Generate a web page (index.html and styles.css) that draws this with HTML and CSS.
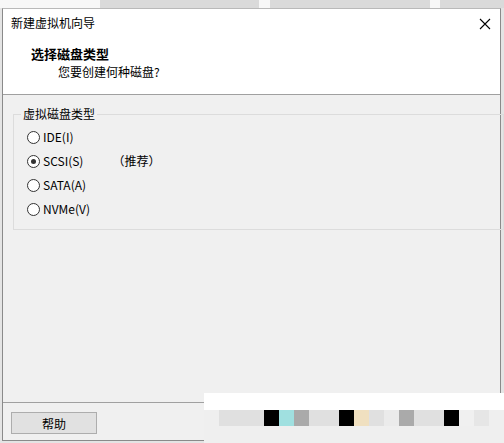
FILE: index.html
```html
<!DOCTYPE html>
<html>
<head>
    <meta charset="utf-8">
    <link rel="stylesheet" href="styles.css">
</head>
<body>
    <div class="desktop-strip">
        <div class="strip light" style="width: 100px"></div>
        <div class="strip dark" style="width: 159px"></div>
        <div class="strip light" style="width: 11px"></div>
        <div class="strip dark" style="width: 160px"></div>
        <div class="strip light" style="width: 10px"></div>
        <div class="strip dark" style="width: 64px"></div>
    </div>

    <div class="window">
        <div class="titlebar">
            <span class="title">新建虚拟机向导</span>
            <svg class="close" width="12" height="12" viewBox="0 0 12 12">
                <path d="M1 1 L11 11 M11 1 L1 11" stroke="#000" stroke-width="1.1" fill="none"/>
            </svg>
        </div>

        <div class="header">
            <div class="heading">选择磁盘类型</div>
            <div class="subheading">您要创建何种磁盘?</div>
        </div>

        <div class="content">
            <fieldset class="group">
                <legend>虚拟磁盘类型</legend>
                <div class="option">
                    <span class="radio"></span>
                    <span class="label">IDE(I)</span>
                </div>
                <div class="option">
                    <span class="radio checked"></span>
                    <span class="label">SCSI(S)</span>
                    <span class="note">（推荐）</span>
                </div>
                <div class="option">
                    <span class="radio"></span>
                    <span class="label">SATA(A)</span>
                </div>
                <div class="option">
                    <span class="radio"></span>
                    <span class="label">NVMe(V)</span>
                </div>
            </fieldset>
        </div>

        <div class="footer">
            <button class="btn">帮助</button>
        </div>
    </div>

    <!-- preview strip sitting over the lower right corner -->
    <div class="preview">
        <div class="preview-band"></div>
        <div class="swatches">
            <div class="sw" style="width: 45px; background: #e0e0e0"></div>
            <div class="sw" style="background: #000"></div>
            <div class="sw" style="background: #a0e0e0"></div>
            <div class="sw" style="background: #aaaaaa"></div>
            <div class="sw" style="width: 30px; background: #e0e0e0"></div>
            <div class="sw" style="background: #000"></div>
            <div class="sw" style="background: #f0e0c0"></div>
            <div class="sw" style="background: #e0e0e0"></div>
            <div class="sw" style="background: #ebebeb"></div>
            <div class="sw" style="background: #aaaaaa"></div>
            <div class="sw" style="width: 30px; background: #e0e0e0"></div>
            <div class="sw" style="background: #000"></div>
            <div class="sw" style="background: #f0f0f0"></div>
            <div class="sw" style="background: #e6e6e6"></div>
        </div>
    </div>
</body>
</html>
```

FILE: styles.css
```css
html, body {
    margin: 0;
    padding: 0;
}

body {
    width: 504px;
    height: 443px;
    overflow: hidden;
    position: relative;
    background: #e4e4e4;
    font-family: "Noto Sans CJK SC", "Microsoft YaHei", sans-serif;
    font-size: 12px;
    color: #000;
}

.desktop-strip {
    display: flex;
    height: 8px;
}

.strip.light {
    background: #f7f7f7;
}

.strip.dark {
    background: #dadada;
}

.window {
    width: 497px;
    height: 431px;
    margin-left: 2px;
    border: 1px solid #8a8a8a;
    border-top-color: #b9b9b9;
    background: #f0f0f0;
    display: flex;
    flex-direction: column;
}

.titlebar {
    height: 28px;
    background: #fff;
    display: flex;
    align-items: center;
    justify-content: space-between;
    padding: 0 9px 0 8px;
}

.title {
    line-height: 14px;
}

.close {
    display: block;
    margin-top: 1px;
}

.header {
    height: 57px;
    background: #fff;
    border-bottom: 1px solid #a0a0a0;
}

.heading {
    font-weight: bold;
    font-size: 13px;
    line-height: 16px;
    padding: 9px 0 0 28px;
}

.subheading {
    line-height: 16px;
    padding: 2px 0 0 55px;
}

.content {
    flex: 1;
    padding: 12px 10px 0 10px;
}

.group {
    margin: 0;
    width: 476px;
    border: 1px solid #dcdcdc;
    padding: 4px 0 8px 13px;
}

.group legend {
    padding: 0 2px;
    margin-left: -6px;
    line-height: 14px;
}

.option {
    display: flex;
    align-items: center;
    height: 24px;
}

.radio {
    width: 11px;
    height: 11px;
    border: 1px solid #333;
    border-radius: 50%;
    background: #fff;
    box-sizing: content-box;
    position: relative;
    flex: none;
}

.radio.checked::after {
    content: "";
    position: absolute;
    left: 3px;
    top: 3px;
    width: 5px;
    height: 5px;
    border-radius: 50%;
    background: #333;
}

.label {
    margin-left: 3px;
    line-height: 14px;
}

.note {
    margin-left: 29px;
    line-height: 14px;
}

.footer {
    height: 38px;
    border-top: 1px solid #a0a0a0;
    padding: 9px 0 0 8px;
    box-sizing: border-box;
}

.btn {
    width: 86px;
    height: 22px;
    border: 1px solid #adadad;
    background: #e1e1e1;
    font-family: inherit;
    font-size: 12px;
    padding: 0;
    color: #000;
}

.preview {
    position: absolute;
    left: 204px;
    top: 393px;
    width: 300px;
    height: 50px;
    background: #efefef;
}

.preview-band {
    height: 17px;
    background: #fff;
}

.swatches {
    display: flex;
    margin-left: 15px;
    height: 16px;
}

.sw {
    width: 15px;
}
```
